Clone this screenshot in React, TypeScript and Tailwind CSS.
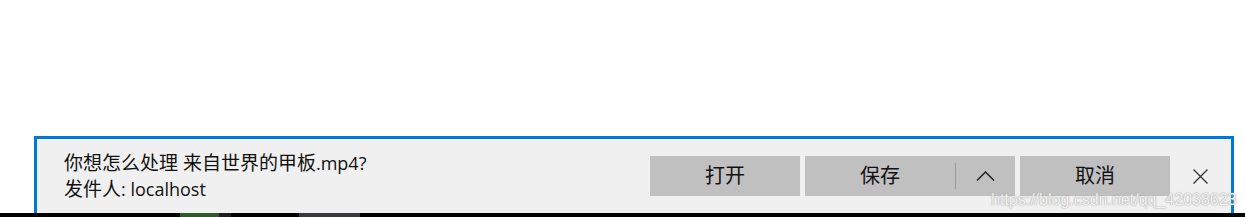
import React from "react";

export default function App() {
  const cjk = { fontFamily: '"Open Sans", "Noto Sans CJK SC", sans-serif' };
  return (
    <div className="relative flex h-[217px] w-[1245px] flex-col bg-white overflow-hidden" style={cjk}>
      <div className="h-[136px]" />
      <div className="ml-[34px] flex h-[77px] w-[1200px] items-center justify-between border-[3px] border-b-0 border-[#0078d7] bg-[#f0f0f0]">
        <div className="flex flex-col pl-[27px] text-[18px] leading-[26px] text-[#111] -mt-[1px]">
          <span><span className="text-[19px]">你想怎么处理 来自世界的甲板</span>.mp4?</span>
          <span><span className="text-[19px]">发件人</span>: localhost</span>
        </div>
        <div className="flex items-center gap-[5px]">
          <button className="flex h-[40px] w-[150px] items-center justify-center bg-[#c0c0c0] text-[20px] text-[#111]">打开</button>
          <div className="flex h-[40px] w-[210px] items-center bg-[#c0c0c0]">
            <span className="flex w-[150px] items-center justify-center text-[20px] text-[#111]">保存</span>
            <span className="h-[26px] w-px bg-[#9a9a9a]" />
            <span className="flex flex-1 items-center justify-center">
              <svg width="19" height="10" viewBox="0 0 19 10">
                <path d="M1 9.5 L9.5 1 L18 9.5" fill="none" stroke="#1a1a1a" strokeWidth="1.4" />
              </svg>
            </span>
          </div>
          <button className="flex h-[40px] w-[150px] items-center justify-center bg-[#c0c0c0] text-[20px] text-[#111]">取消</button>
          <div className="flex h-[40px] w-[56px] items-center justify-center pr-[6px]">
            <svg width="15" height="15" viewBox="0 0 15 15">
              <path d="M0.5 0.5 L14.5 14.5 M14.5 0.5 L0.5 14.5" fill="none" stroke="#333" strokeWidth="1.3" />
            </svg>
          </div>
        </div>
      </div>
      <div className="flex h-[4px] w-full bg-black">
        <div className="w-[180px]" />
        <div className="w-[39px] bg-[#2d5a27]" />
        <div className="w-[12px] bg-[#1e1e1e]" />
        <div className="w-[68px]" />
        <div className="w-[61px] bg-[#3a3a3e]" />
      </div>
      <span
        className="absolute left-[991px] top-[188px] whitespace-nowrap text-[16px] text-white/85"
        style={{ fontFamily: '"Liberation Sans", sans-serif', textShadow: "0 0 1px #999, 0 0 2px #bbb" }}
      >
        https://blog.csdn.net/qq_42038623
      </span>
    </div>
  );
}
